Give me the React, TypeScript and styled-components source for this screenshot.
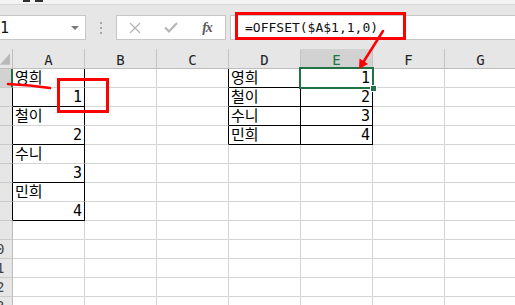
import React from "react";
import styled, { createGlobalStyle } from "styled-components";

const GRID = "#d4d4d4";
const INK = "#000000";
const GREEN = "#217346";
const CHROME = "#e6e6e6";

const GlobalStyle = createGlobalStyle`
  html, body {
    margin: 0;
    padding: 0;
    background: #ffffff;
    overflow: hidden;
  }
  #root {
    width: 515px;
    height: 305px;
    overflow: hidden;
  }
`;

const Window = styled.div`
  position: relative;
  width: 515px;
  height: 305px;
  overflow: hidden;
  background: #ffffff;
  font-family: "DejaVu Sans Mono", "Noto Sans CJK KR", monospace;
`;

const RibbonEdge = styled.div`
  height: 4px;
  background: #f3f3f3;
  border-bottom: 1px solid #d6d6d6;
  overflow: hidden;
  display: flex;
  gap: 5px;
  padding-left: 23px;
`;

const RibbonMark = styled.span<{ $w: number }>`
  width: ${(p) => p.$w}px;
  height: 2px;
  background: #303030;
`;

const FormulaBar = styled.div`
  display: flex;
  align-items: flex-start;
  height: 35px;
  padding-top: 10px;
  box-sizing: border-box;
  background: ${CHROME};
`;

const NameBox = styled.div`
  width: 98px;
  height: 25px;
  margin-left: -12px;
  box-sizing: border-box;
  border: 1px solid #c6c6c6;
  background: #ffffff;
  display: flex;
  align-items: center;
  justify-content: space-between;
  padding: 0 6px 0 2px;
  font-size: 15px;
  color: #111;
`;

const DropArrow = styled.span`
  width: 0;
  height: 0;
  border-left: 4px solid transparent;
  border-right: 4px solid transparent;
  border-top: 4px solid #7a7a7a;
`;

const Grip = styled.div`
  margin-left: 14px;
  margin-top: 7px;
  display: flex;
  flex-direction: column;
  gap: 3px;
  span {
    width: 2px;
    height: 2px;
    background: #a8a8a8;
  }
`;

const FuncBox = styled.div`
  margin-left: 14px;
  width: 110px;
  height: 25px;
  box-sizing: border-box;
  border: 1px solid #c6c6c6;
  background: #ffffff;
  display: flex;
  align-items: center;
`;

const FuncSlot = styled.span`
  width: 36px;
  display: flex;
  justify-content: center;
  align-items: center;
`;

const FxLabel = styled.span`
  font-family: "Liberation Serif", serif;
  font-style: italic;
  font-weight: bold;
  font-size: 14px;
  color: #5a5a5a;
  letter-spacing: -1px;
`;

const FormulaBox = styled.div`
  margin-left: 4px;
  flex: 1;
  margin-right: -6px;
  height: 25px;
  box-sizing: border-box;
  border: 1px solid #c6c6c6;
  background: #ffffff;
  display: flex;
  align-items: center;
  padding-left: 14px;
  font-size: 13px;
  color: #111;
  white-space: nowrap;
`;

const Sheet = styled.div`
  display: grid;
  grid-template-columns: 13px repeat(7, 72px);
  grid-template-rows: 20px;
  grid-auto-rows: 19px;
  padding-top: 9px;
  background: ${CHROME};
`;

const Corner = styled.div`
  box-sizing: border-box;
  border-right: 1px solid #bdbdbd;
  border-bottom: 1px solid #bdbdbd;
  display: flex;
  align-items: flex-end;
  justify-content: flex-end;
  padding: 0 2px 2px 0;
  overflow: hidden;
`;

const ColHead = styled.div<{ $active?: boolean }>`
  box-sizing: border-box;
  border-right: 1px solid #c4c4c4;
  border-bottom: 1px solid #bdbdbd;
  background: ${(p) => (p.$active ? "#d2d2d2" : CHROME)};
  color: ${(p) => (p.$active ? GREEN : "#222")};
  display: flex;
  align-items: center;
  justify-content: center;
  padding-top: 3px;
  font-size: 14px;
`;

const RowHead = styled.div<{ $active?: boolean; $edge: string }>`
  box-sizing: border-box;
  border-right: ${(p) => (p.$active ? 2 : 1)}px solid ${(p) => p.$edge};
  border-bottom: 1px solid #cacaca;
  background: ${(p) => (p.$active ? "#d2d2d2" : CHROME)};
  overflow: hidden;
  display: flex;
  align-items: flex-end;
`;

const RowLabel = styled.span`
  flex: none;
  width: 30px;
  margin-left: -19px;
  text-align: center;
  font-size: 14px;
  line-height: 17px;
  color: #444;
`;

const Cell = styled.div<{
  $right: string;
  $bottom: string;
  $align: "left" | "right";
  $selected?: boolean;
}>`
  position: ${(p) => (p.$selected ? "relative" : "static")};
  box-sizing: border-box;
  background: #ffffff;
  border-right: 1px solid ${(p) => p.$right};
  border-bottom: 1px solid ${(p) => p.$bottom};
  display: flex;
  align-items: flex-end;
  justify-content: ${(p) => (p.$align === "right" ? "flex-end" : "flex-start")};
  padding: 0 2px 0 2px;
  font-size: 15px;
  line-height: 17px;
  color: #000;
  white-space: nowrap;
`;

const Selection = styled.div`
  position: absolute;
  top: -2px;
  left: -2px;
  right: -2px;
  bottom: -2px;
  border: 2px solid ${GREEN};
  z-index: 2;
  pointer-events: none;
`;

const FillHandle = styled.div`
  position: absolute;
  right: -5px;
  bottom: -5px;
  width: 5px;
  height: 5px;
  background: ${GREEN};
  border: 1px solid #ffffff;
  z-index: 3;
`;

const Marks = styled.svg`
  position: absolute;
  top: 0;
  left: 0;
  z-index: 5;
  pointer-events: none;
`;

const COLS = ["A", "B", "C", "D", "E", "F", "G"];
const ROWS = Array.from({ length: 13 }, (_, i) => i + 1);

type Spec = { text: string; align: "left" | "right" };
const DATA: Record<string, Spec> = {
  A1: { text: "영희", align: "left" },
  A2: { text: "1", align: "right" },
  A3: { text: "철이", align: "left" },
  A4: { text: "2", align: "right" },
  A5: { text: "수니", align: "left" },
  A6: { text: "3", align: "right" },
  A7: { text: "민희", align: "left" },
  A8: { text: "4", align: "right" },
  D1: { text: "영희", align: "left" },
  E1: { text: "1", align: "right" },
  D2: { text: "철이", align: "left" },
  E2: { text: "2", align: "right" },
  D3: { text: "수니", align: "left" },
  E3: { text: "3", align: "right" },
  D4: { text: "민희", align: "left" },
  E4: { text: "4", align: "right" },
};

function rightEdge(col: string, row: number) {
  if (col === "A" && row <= 8) return INK;
  if ((col === "C" || col === "D" || col === "E") && row <= 4) return INK;
  return GRID;
}

function bottomEdge(col: string, row: number) {
  if (col === "A" && row <= 8 && row % 2 === 0) return INK;
  if ((col === "D" || col === "E") && row <= 4) return INK;
  return GRID;
}

function rowEdge(row: number) {
  if (row === 1) return GREEN;
  if (row <= 8) return INK;
  return "#bdbdbd";
}

export default function App() {
  return (
    <Window>
      <GlobalStyle />
      <RibbonEdge>
        <RibbonMark $w={7} />
        <RibbonMark $w={8} />
      </RibbonEdge>

      <FormulaBar>
        <NameBox>
          <span>E1</span>
          <DropArrow />
        </NameBox>
        <Grip>
          <span />
          <span />
          <span />
        </Grip>
        <FuncBox>
          <FuncSlot>
            <svg width="12" height="12" viewBox="0 0 12 12">
              <path d="M1 1 L11 11 M11 1 L1 11" stroke="#b4b4b4" strokeWidth="1.3" fill="none" />
            </svg>
          </FuncSlot>
          <FuncSlot>
            <svg width="14" height="11" viewBox="0 0 14 11">
              <path d="M1 5.5 L5 9.5 L13 1" stroke="#b4b4b4" strokeWidth="2" fill="none" />
            </svg>
          </FuncSlot>
          <FuncSlot>
            <FxLabel>fx</FxLabel>
          </FuncSlot>
        </FuncBox>
        <FormulaBox>=OFFSET($A$1,1,0)</FormulaBox>
      </FormulaBar>

      <Sheet>
        <Corner>
          <svg width="12" height="14" viewBox="0 0 12 14">
            <polygon points="12,0 12,14 0,14" fill="#b8b8b8" />
          </svg>
        </Corner>
        {COLS.map((c) => (
          <ColHead key={c} $active={c === "E"}>
            {c}
          </ColHead>
        ))}
        {ROWS.map((r) => (
          <React.Fragment key={r}>
            <RowHead $active={r === 1} $edge={rowEdge(r)}>
              <RowLabel>{r}</RowLabel>
            </RowHead>
            {COLS.map((c) => {
              const id = `${c}${r}`;
              const spec = DATA[id];
              const selected = id === "E1";
              return (
                <Cell
                  key={id}
                  $right={rightEdge(c, r)}
                  $bottom={bottomEdge(c, r)}
                  $align={spec ? spec.align : "left"}
                  $selected={selected}
                >
                  {spec?.text}
                  {selected && (
                    <>
                      <Selection />
                      <FillHandle />
                    </>
                  )}
                </Cell>
              );
            })}
          </React.Fragment>
        ))}
      </Sheet>

      <Marks width="515" height="305" viewBox="0 0 515 305">
        <rect x="236.5" y="13.5" width="168" height="25" fill="none" stroke="#ff0000" strokeWidth="3" />
        <rect x="58.5" y="79.5" width="49" height="32" fill="none" stroke="#ff0000" strokeWidth="3" />
        <path d="M8 84 Q 30 85 50 88" fill="none" stroke="#ff0000" strokeWidth="2.5" strokeLinecap="round" />
        <line x1="383" y1="31" x2="364" y2="61" stroke="#ff0000" strokeWidth="2.5" strokeLinecap="round" />
        <polygon points="359,69 359.5,58.5 368,64" fill="#ff0000" />
      </Marks>
    </Window>
  );
}
